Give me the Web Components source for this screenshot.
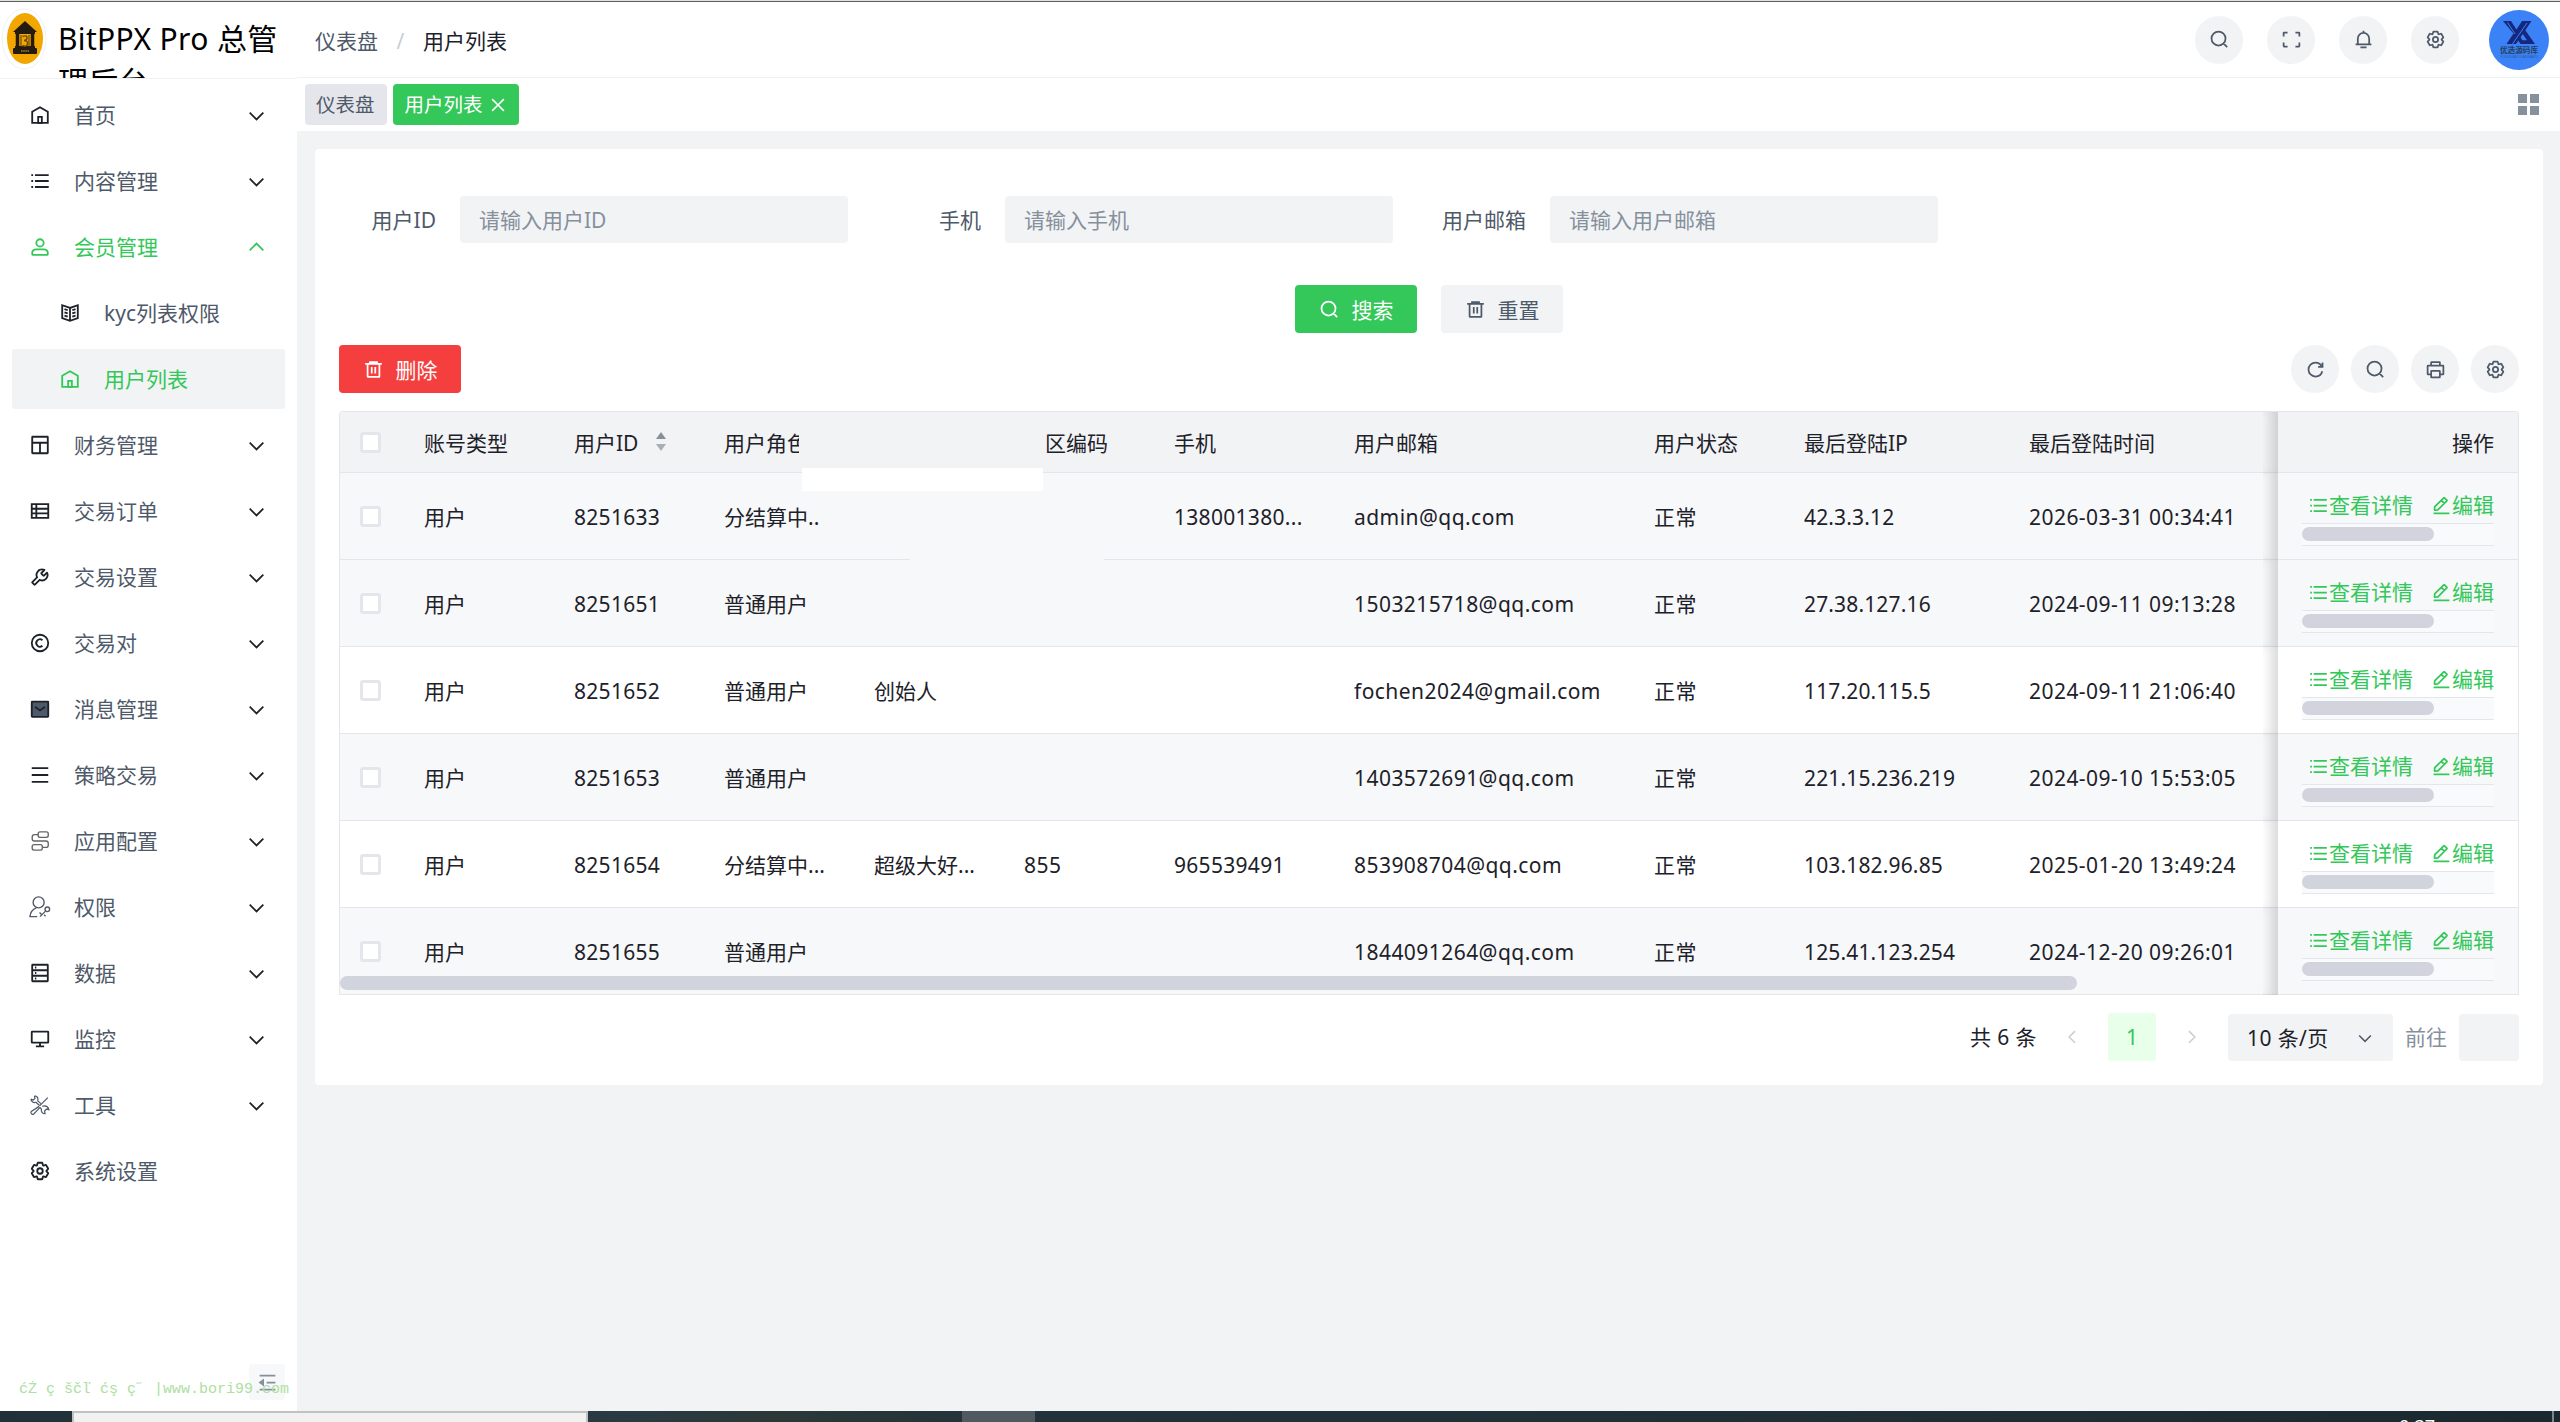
<!DOCTYPE html>
<html lang="zh-CN">
<head>
<meta charset="utf-8">
<title>BitPPX Pro 总管理后台</title>
<style>
  html, body {
    margin: 0;
    height: 100%;
    overflow: hidden;
  }

  body {
    font-family: "Noto Sans", "Noto Sans CJK SC", sans-serif;
    font-size: 21px;
    line-height: 30px;
    color: #1d2129;
    background: #f2f3f5;
    --green: #34c759;
    --text-2: #4e5969;
    --text-3: #86909c;
    --fill: #f2f3f5;
    --line: #e5e6eb;
  }
</style>
</head>
<body>
<admin-app></admin-app>

<script>
const ICONS = {
  home: '<path d="M7 17 24 7l17 10v24H7V17Z"/><path d="M20 28h8v13h-8V28Z"/>',
  list: '<path d="M13 24h30M5 11h4m4 26h30M13 11h30M5 24h4M5 37h4"/>',
  user: '<path d="M7 37c0-4.97 4.03-8 9-8h16c4.97 0 9 3.03 9 8v3a1 1 0 0 1-1 1H8a1 1 0 0 1-1-1v-3Z"/><circle cx="24" cy="15" r="8"/>',
  book: '<path d="M24 13 7 7v28l17 6 17-6V7l-17 6Zm0 0v27.5M29 18l7-2.5M29 25l7-2.5M29 32l7-2.5M19 18l-7-2.5m7 9.5-7-2.5m7 9.5-7-2.5"/>',
  layout: '<rect x="7" y="6" width="34" height="36" rx="1"/><path d="M7 19h34M24 19v23"/>',
  nav: '<path d="M6 19h10m0 0h26m-26 0V9m0 10v10m0 0v10m0-10H6m10 0h26M6 9h36v30H6V9Z"/>',
  tool: '<path d="M19.994 11.035c3.66-3.659 9.094-4.46 13.531-2.405a.1.1 0 0 1 .028.16l-6.488 6.488a1 1 0 0 0 0 1.414l4.243 4.243a1 1 0 0 0 1.414 0l6.488-6.488a.1.1 0 0 1 .16.028c2.056 4.437 1.254 9.872-2.405 13.53-3.695 3.696-9.2 4.477-13.66 2.347L12.923 40.733a1 1 0 0 1-1.414 0L7.266 36.49a1 1 0 0 1 0-1.414l10.382-10.382c-2.13-4.46-1.349-9.965 2.346-13.66Z"/>',
  copyright: '<path d="M29.292 18a8 8 0 1 0 0 12"/><circle cx="24" cy="24" r="18"/>',
  email: '<rect x="6" y="8" width="36" height="33" rx="1" fill="#4e5969"/><path d="m13 19 11 8 11-8"/>',
  menu: '<path d="M42 9H6m36 15H6m36 15H6"/>',
  flow: '<g stroke="#666" stroke-width="3"><rect x="20" y="4" width="22" height="12" rx="4"/><rect x="7" y="32" width="22" height="12" rx="4"/><path d="M20 10h-8a5 5 0 0 0-5 5v4a5 5 0 0 0 5 5h25a5 5 0 0 1 5 5v4a5 5 0 0 1-5 5h-8"/></g>',
  role: '<g stroke="#4e5969" stroke-width="3"><circle cx="21" cy="14" r="12"/><path d="M16 26C8 29 3 36 2 45h16"/><circle cx="40" cy="29" r="5"/><path d="m36 33-12 12M28 41l-5-5M33 41l3 3"/></g>',
  storage: '<path d="M7 18h34v12H7V18ZM40 6H8a1 1 0 0 0-1 1v11h34V7a1 1 0 0 0-1-1ZM7 30h34v11a1 1 0 0 1-1 1H8a1 1 0 0 1-1-1V30Z"/><path d="M13 12h3M13 24h3M13 36h3"/>',
  desktop: '<path d="M24 32v8m0 0h-9m9 0h9M7 32h34a1 1 0 0 0 1-1V9a1 1 0 0 0-1-1H7a1 1 0 0 0-1 1v22a1 1 0 0 0 1 1Z"/>',
  wrench: '<g stroke="#4e5969" stroke-width="2.6"><path d="M41 8 23 26M22 27 5 38a4 4 0 0 0 5 6l14-15"/><path d="M4 11c1 6 6 9 11 7l8 7M12 4c6 0 9 5 7 11l7 6M4 11l5 2 4-3-1-6M29 27c6-2 12 0 14 6l-5 0-4 4 1 6c-6 0-9-5-8-10l-3-4M38 33l7 2"/></g>',
  setting: '<path d="M18.797 6.732A1 1 0 0 1 19.76 6h8.48a1 1 0 0 1 .964.732l1.285 4.628a1 1 0 0 0 1.213.7l4.651-1.2a1 1 0 0 1 1.116.468l4.24 7.344a1 1 0 0 1-.153 1.2L38.193 23.3a1 1 0 0 0 0 1.402l3.364 3.427a1 1 0 0 1 .153 1.2l-4.24 7.344a1 1 0 0 1-1.116.468l-4.65-1.2a1 1 0 0 0-1.214.7l-1.285 4.628a1 1 0 0 1-.964.732h-8.48a1 1 0 0 1-.963-.732L17.51 36.64a1 1 0 0 0-1.213-.7l-4.65 1.2a1 1 0 0 1-1.116-.468l-4.24-7.344a1 1 0 0 1 .153-1.2L9.809 24.7a1 1 0 0 0 0-1.402l-3.364-3.427a1 1 0 0 1-.153-1.2l4.24-7.344a1 1 0 0 1 1.116-.468l4.65 1.2a1 1 0 0 0 1.213-.7l1.286-4.628Z"/><circle cx="24" cy="24" r="6"/>',
  search: '<path d="M33.072 33.071c6.248-6.248 6.248-16.379 0-22.627-6.249-6.249-16.38-6.249-22.628 0-6.248 6.248-6.248 16.379 0 22.627 6.248 6.248 16.38 6.248 22.628 0Zm0 0 8.485 8.485"/>',
  fullscreen: '<path d="M42 17V9a1 1 0 0 0-1-1h-8M6 17V9a1 1 0 0 1 1-1h8m27 23v8a1 1 0 0 1-1 1h-8M6 31v8a1 1 0 0 0 1 1h8"/>',
  bell: '<path d="M24 9c7.18 0 13 5.82 13 13v13H11V22c0-7.18 5.82-13 13-13Zm0 0V4M6 35h36m-25 7h14"/>',
  trash: '<path d="M5 11h5.5m0 0v29a1 1 0 0 0 1 1h25a1 1 0 0 0 1-1V11m-27 0H16m21.5 0H43m-5.5 0H32m-16 0V7h16v4m-16 0h16M20 18v15m8-15v15"/>',
  refresh: '<path d="M38.837 18C36.463 12.136 30.715 8 24 8 15.163 8 8 15.163 8 24s7.163 16 16 16c7.455 0 13.72-5.1 15.496-12M40 8v10H30"/>',
  printer: '<path d="M14 15V8a1 1 0 0 1 1-1h18a1 1 0 0 1 1 1v7M14 35H7a1 1 0 0 1-1-1V16a1 1 0 0 1 1-1h34a1 1 0 0 1 1 1v18a1 1 0 0 1-1 1h-7"/><rect x="14" y="27" width="20" height="15" rx="1"/>',
  edit: '<path d="m30.48 19.038 5.733-5.734a1 1 0 0 0 0-1.414l-5.586-5.586a1 1 0 0 0-1.414 0l-5.734 5.734m7 7L15.763 33.754a1 1 0 0 1-.59.286l-6.048.708a1 1 0 0 1-1.113-1.069l.477-6.31a1 1 0 0 1 .29-.631l14.7-14.7m7 7-7-7M6 42h36"/>',
  fold: '<path d="M42 8H6m36 16H22m20 16H6"/><path d="m14 29-7-5 7-5v10Z" fill="currentColor"/>',
  close: '<path d="M9.857 9.858 24 24m0 0 14.142 14.142M24 24 38.142 9.858M24 24 9.857 38.142"/>',
  down: '<path d="M39.6 17.443 24.043 33 8.487 17.443"/>',
  up: '<path d="M39.6 30.557 24.043 15 8.487 30.557"/>',
  left: '<path d="M32 8.4 16.444 23.956 32 39.513"/>',
  right: '<path d="m16 39.513 15.556-15.557L16 8.4"/>',
};

class UiIcon extends HTMLElement {
  constructor() {
    super();
    this.attachShadow({ mode: "open" });
  }

  connectedCallback() {
    this.shadowRoot.innerHTML = `
      <style>
        :host { display: inline-flex; flex: none; width: 22px; height: 22px; }
        svg { width: 100%; height: 100%; }
      </style>
      <svg viewBox="0 0 48 48" fill="none" stroke="currentColor" stroke-width="4">${ICONS[this.getAttribute("name")]}</svg>
    `;
  }
}

class MenuItem extends HTMLElement {
  constructor() {
    super();
    this.attachShadow({ mode: "open" });
  }

  static get styles() {
    return `
      :host {
        display: flex;
        align-items: center;
        box-sizing: border-box;
        height: 60px;
        padding: 0 18px 0 17px;
        border-radius: 3px;
        color: var(--text-2);
      }
      :host([sub]) { padding-left: 47px; }
      :host([active]) { color: var(--green); }
      :host([selected]) { background: var(--fill); color: var(--green); }
      ui-icon { color: #1d2129; }
      :host([active]) ui-icon, :host([selected]) ui-icon { color: inherit; }
      span { flex: 1; margin-left: 23px; }
      .arrow { width: 21px; height: 21px; }
    `;
  }

  connectedCallback() {
    const arrow = this.getAttribute("arrow");
    this.shadowRoot.innerHTML = `
      <style>${MenuItem.styles}</style>
      <ui-icon name="${this.getAttribute("icon")}"></ui-icon>
      <span><slot></slot></span>
      ${arrow ? `<ui-icon class="arrow" name="${arrow}"></ui-icon>` : ""}
    `;
  }
}

class SideBar extends HTMLElement {
  constructor() {
    super();
    this.attachShadow({ mode: "open" });
  }

  static get styles() {
    return `
      :host {
        display: flex;
        flex-direction: column;
        width: 297px;
        background: #fff;
        position: relative;
      }
      .logo {
        display: flex;
        box-sizing: border-box;
        height: 77px;
        padding: 6px 12px 0 1px;
        border-bottom: 1px solid #f0f1f3;
        overflow: hidden;
      }
      .logo svg { flex: none; width: 46px; height: 62px; }
      .logo h1 {
        margin: 9px 0 0 11px;
        font-size: 30px;
        line-height: 43px;
        font-weight: 400;
        letter-spacing: .35px;
        color: #000;
      }
      nav {
        display: flex;
        flex-direction: column;
        gap: 6px;
        padding: 6px 12px;
      }
      .fold {
        display: flex;
        align-items: center;
        justify-content: center;
        width: 36px;
        height: 36px;
        margin: auto 12px 11px auto;
        border-radius: 3px;
        background: #f7f8fa;
        color: var(--text-3);
      }
      .fold ui-icon { width: 21px; height: 21px; }
      /* site stamp lies over the fold button */
      .stamp {
        position: absolute;
        left: 19px;
        bottom: 11px;
        font: 15px/20px "Liberation Mono", monospace;
        color: #aee0a2;
        white-space: pre;
      }
    `;
  }

  connectedCallback() {
    this.shadowRoot.innerHTML = `
      <style>${SideBar.styles}</style>
      <div class="logo">
        <svg viewBox="0 0 46 62">
          <ellipse cx="23" cy="31" rx="22" ry="30" fill="#fff" stroke="#f1f1f1"/>
          <ellipse cx="24" cy="30.500" rx="18" ry="25.500" fill="#f2a600"/>
          <path d="M12 24 24 13l12 11Z" fill="#231a12"/>
          <path d="M14 25h20M14 39h20" stroke="#231a12" stroke-width="2"/>
          <path d="M16.500 25v15M31.500 25v15" stroke="#231a12" stroke-width="3.500"/>
          <path d="M20 27v12M28 27v12" stroke="#5a3d08"/>
          <path d="M21.500 28.500q5-2 4.500 2-.5 2-3 2 4 0 3.500 3.500-1 3.500-5 1.500" fill="none" stroke="#6b4808" stroke-width="1.400"/>
          <rect x="12" y="40" width="24" height="6" rx="1" fill="#231a12"/>
          <path d="M20 43h8" stroke="#8a6a20" stroke-width="2" stroke-dasharray="1.500 .7"/>
        </svg>
        <h1>BitPPX Pro 总管理后台</h1>
      </div>
      <nav>
        <menu-item icon="home" arrow="down">首页</menu-item>
        <menu-item icon="list" arrow="down">内容管理</menu-item>
        <menu-item icon="user" arrow="up" active>会员管理</menu-item>
        <menu-item icon="book" sub>kyc列表权限</menu-item>
        <menu-item icon="home" sub selected>用户列表</menu-item>
        <menu-item icon="layout" arrow="down">财务管理</menu-item>
        <menu-item icon="nav" arrow="down">交易订单</menu-item>
        <menu-item icon="tool" arrow="down">交易设置</menu-item>
        <menu-item icon="copyright" arrow="down">交易对</menu-item>
        <menu-item icon="email" arrow="down">消息管理</menu-item>
        <menu-item icon="menu" arrow="down">策略交易</menu-item>
        <menu-item icon="flow" arrow="down">应用配置</menu-item>
        <menu-item icon="role" arrow="down">权限</menu-item>
        <menu-item icon="storage" arrow="down">数据</menu-item>
        <menu-item icon="desktop" arrow="down">监控</menu-item>
        <menu-item icon="wrench" arrow="down">工具</menu-item>
        <menu-item icon="setting">系统设置</menu-item>
      </nav>
      <div class="fold"><ui-icon name="fold"></ui-icon></div>
      <div class="stamp">ćŻ ç ščľ ćş ç˝ |www.bori99.com</div>
    `;
  }
}

class RoundButton extends HTMLElement {
  constructor() {
    super();
    this.attachShadow({ mode: "open" });
  }

  connectedCallback() {
    this.shadowRoot.innerHTML = `
      <style>
        :host {
          display: flex;
          align-items: center;
          justify-content: center;
          width: 48px;
          height: 48px;
          border-radius: 50%;
          background: var(--fill);
          color: var(--text-2);
        }
        ui-icon { width: 21px; height: 21px; }
      </style>
      <ui-icon name="${this.getAttribute("icon")}"></ui-icon>
    `;
  }
}

class UiButton extends HTMLElement {
  constructor() {
    super();
    this.attachShadow({ mode: "open" });
  }

  connectedCallback() {
    this.shadowRoot.innerHTML = `
      <style>
        :host {
          display: inline-flex;
          align-items: center;
          justify-content: center;
          gap: 12px;
          width: 122px;
          height: 48px;
          border-radius: 4px;
          background: var(--fill);
          color: var(--text-2);
        }
        :host([type=primary]) { background: var(--green); color: #fff; }
        :host([type=danger]) { background: #f53f3f; color: #fff; }
        ui-icon { width: 21px; height: 21px; }
        span { padding-top: 1px; }
      </style>
      <ui-icon name="${this.getAttribute("icon")}"></ui-icon><span><slot></slot></span>
    `;
  }
}

class TopBar extends HTMLElement {
  constructor() {
    super();
    this.attachShadow({ mode: "open" });
  }

  static get styles() {
    return `
      :host { display: block; background: #fff; }
      header {
        display: flex;
        align-items: center;
        box-sizing: border-box;
        height: 76px;
        padding: 0 11px 0 18px;
        border-bottom: 1px solid #f0f1f3;
      }
      .crumb { display: flex; color: var(--text-2); padding-top: 3px; }
      .crumb i { width: 45px; text-align: center; color: #c9cdd4; font-style: normal; }
      .crumb b { font-weight: 400; color: #1d2129; }
      .actions { display: flex; align-items: center; gap: 24px; margin-left: auto; }
      .avatar { width: 60px; height: 60px; margin-left: 6px; }
      .tabs { display: flex; align-items: center; height: 53px; padding: 0 21px 0 8px; }
      .tab {
        display: flex;
        align-items: center;
        height: 41px;
        padding: 0 12px 0 11px;
        margin-right: 6px;
        border-radius: 4px;
        font-size: 19.5px;
        background: #e5e6eb;
        color: var(--text-2);
      }
      .tab.on { background: var(--green); color: #fff; padding: 0 11px 0 12px; }
      .tab ui-icon { width: 20px; height: 20px; margin-left: 5px; }
      .grid { display: grid; grid-template-columns: 9px 9px; grid-auto-rows: 9px; gap: 3px; margin-left: auto; }
      .grid i { background: #87909d; }
    `;
  }

  connectedCallback() {
    this.shadowRoot.innerHTML = `
      <style>${TopBar.styles}</style>
      <header>
        <div class="crumb">仪表盘<i>/</i><b>用户列表</b></div>
        <div class="actions">
          <round-button icon="search"></round-button>
          <round-button icon="fullscreen"></round-button>
          <round-button icon="bell"></round-button>
          <round-button icon="setting"></round-button>
          <svg class="avatar" viewBox="0 0 60 60">
            <circle cx="30" cy="30" r="30" fill="#3b82f6"/>
            <path d="M14 11h8l5.500 8.500L33 11h9.500L27 34h-9.500l7-10.500Z" fill="#15277f"/>
            <path d="M34 17 46 34H31.500l-3.500-5.500 2.200-3.300 3.200 5h4.600l-6.500-9.700Z" fill="#15277f"/>
            <path d="M18.500 12.500 26 24M38 13 23.500 34" stroke="#3b82f6" stroke-width="1" fill="none"/>
            <text x="30" y="43" text-anchor="middle" font-family="Noto Sans CJK SC" font-weight="700" font-size="7.600" fill="#23405f">优选源码库</text>
            <text x="30" y="48" text-anchor="middle" font-family="Liberation Sans" font-size="3.600" fill="#2b5e9e">YOUXUANYUANMAKU</text>
          </svg>
        </div>
      </header>
      <div class="tabs">
        <div class="tab">仪表盘</div>
        <div class="tab on">用户列表<ui-icon name="close"></ui-icon></div>
        <div class="grid"><i></i><i></i><i></i><i></i></div>
      </div>
    `;
  }
}

class FormField extends HTMLElement {
  constructor() {
    super();
    this.attachShadow({ mode: "open" });
  }

  connectedCallback() {
    this.shadowRoot.innerHTML = `
      <style>
        :host { display: flex; align-items: center; width: 509px; margin-right: 36px; }
        label { width: 97px; margin-right: 24px; text-align: right; white-space: nowrap; color: var(--text-2); }
        div {
          box-sizing: border-box;
          width: 388px;
          height: 47px;
          padding: 9px 19px;
          border-radius: 4px;
          background: var(--fill);
          color: var(--text-3);
        }
      </style>
      <label>${this.getAttribute("label")}</label>
      <div>请输入${this.getAttribute("label")}</div>
    `;
  }
}

const USERS = [
  ["用户", "8251633", "分结算中..", "", "", "138001380...", "admin@qq.com", "正常", "42.3.3.12", "2026-03-31 00:34:41"],
  ["用户", "8251651", "普通用户", "", "", "", "1503215718@qq.com", "正常", "27.38.127.16", "2024-09-11 09:13:28"],
  ["用户", "8251652", "普通用户", "创始人", "", "", "fochen2024@gmail.com", "正常", "117.20.115.5", "2024-09-11 21:06:40"],
  ["用户", "8251653", "普通用户", "", "", "", "1403572691@qq.com", "正常", "221.15.236.219", "2024-09-10 15:53:05"],
  ["用户", "8251654", "分结算中...", "超级大好...", "855", "965539491", "853908704@qq.com", "正常", "103.182.96.85", "2025-01-20 13:49:24"],
  ["用户", "8251655", "普通用户", "", "", "", "1844091264@qq.com", "正常", "125.41.123.254", "2024-12-20 09:26:01"],
];

class UserTable extends HTMLElement {
  constructor() {
    super();
    this.attachShadow({ mode: "open" });
  }

  static get styles() {
    return `
      :host {
        display: block;
        position: relative;
        border: 1px solid var(--line);
        border-bottom: 0;
        border-radius: 4px 4px 0 0;
        overflow: hidden;
      }
      .row {
        display: grid;
        grid-template-columns: 60px 150px 150px 150px 150px 150px 180px 300px 150px 225px 273px 240px;
        height: 86px;
        border-bottom: 1px solid var(--line);
      }
      .row.head { height: 60px; background: var(--fill); }
      .row.tint { background: #f7f8fa; }
      .cell {
        display: flex;
        align-items: center;
        padding: 0 24px;
        white-space: nowrap;
      }
      .row:not(.head) .cell { padding-top: 2px; letter-spacing: .45px; }
      .row:not(.head) .cell:nth-child(2), .row:not(.head) .cell:nth-child(4), .row:not(.head) .cell:nth-child(5) { letter-spacing: 0; }
      .row:not(.head) .cell:nth-child(3), .row:not(.head) .cell:nth-child(7) { letter-spacing: .3px; }
      .row:not(.head) .cell:nth-child(10) { letter-spacing: .15px; }
      .head .cell { padding-top: 1px; }
      .row .cell.check { padding: 0 0 0 20px; }
      .check i {
        box-sizing: border-box;
        width: 21px;
        height: 21px;
        border: 3px solid var(--line);
        border-radius: 3px;
        background: #fff;
      }
      .cut span { width: 75px; overflow: hidden; }
      .row .cell.area { padding-left: 45px; }
      .sort { display: grid; gap: 5px; margin: -3px 0 0 18px; }
      .sort i { border: 5.5px solid transparent; border-top: 0; border-bottom: 7px solid #86909c; }
      .sort i + i { border-bottom: 0; border-top: 7px solid #a9aeb8; }
      .fixed { position: relative; display: flex; flex-direction: column; align-items: flex-end; }
      .fixed::before {
        content: "";
        position: absolute;
        top: 0;
        bottom: -1px;
        left: -15px;
        width: 15px;
        box-shadow: inset -12px 0 12px -5px rgba(0, 0, 0, .15);
      }
      .head .fixed { padding: 16px 24px 0 0; height: 44px; }
      .links { display: flex; align-items: center; height: 30px; margin: 17px 24px 0 0; color: var(--green); }
      .links ui-icon { width: 21px; height: 21px; }
      .links span { margin-right: 18px; }
      .links span:last-child { margin-right: 0; }
      .track {
        box-sizing: border-box;
        width: 192px;
        height: 23px;
        margin: 3px 24px 0 0;
        padding-top: 3px;
        border: solid var(--line);
        border-width: 1px 0;
        background: #f9fafb;
      }
      .track i, .bar { display: block; width: 132px; height: 14px; border-radius: 7px; background: #d1d4dd; }
      /* horizontal scrollbar and blanked areas lie over the rows */
      .bar { position: absolute; left: 0; bottom: 5px; width: 1737px; }
      .blank { position: absolute; left: 462px; top: 56px; width: 241px; height: 23px; background: #fff; }
      .blank.two { left: 570px; top: 140px; width: 194px; height: 12px; background: #f7f8fa; }
    `;
  }

  renderRow(user, index) {
    return `
      <div class="row ${index === 0 || index % 2 ? "tint" : ""}">
        <div class="cell check"><i></i></div>
        ${user.map((text) => `<div class="cell">${text}</div>`).join("")}
        <div class="fixed">
          <div class="links">
            <ui-icon name="list"></ui-icon><span>查看详情</span>
            <ui-icon name="edit"></ui-icon><span>编辑</span>
          </div>
          <div class="track"><i></i></div>
        </div>
      </div>
    `;
  }

  connectedCallback() {
    this.shadowRoot.innerHTML = `
      <style>${UserTable.styles}</style>
      <div class="row head">
        <div class="cell check"><i></i></div>
        <div class="cell">账号类型</div>
        <div class="cell">用户ID<span class="sort"><i></i><i></i></span></div>
        <div class="cell cut"><span>用户角色</span></div>
        <div class="cell"></div>
        <div class="cell area">区编码</div>
        <div class="cell">手机</div>
        <div class="cell">用户邮箱</div>
        <div class="cell">用户状态</div>
        <div class="cell">最后登陆IP</div>
        <div class="cell">最后登陆时间</div>
        <div class="fixed">操作</div>
      </div>
      ${USERS.map((user, index) => this.renderRow(user, index)).join("")}
      <div class="blank"></div>
      <div class="blank two"></div>
      <div class="bar"></div>
    `;
  }
}

class PageNav extends HTMLElement {
  constructor() {
    super();
    this.attachShadow({ mode: "open" });
  }

  connectedCallback() {
    this.shadowRoot.innerHTML = `
      <style>
        :host { display: flex; align-items: center; justify-content: flex-end; height: 48px; margin-top: 18px; }
        .step { width: 18px; height: 18px; margin: 0 27px; color: #c9cdd4; }
        .total { letter-spacing: .4px; margin-right: -1px; }
        .page {
          width: 48px;
          line-height: 48px;
          text-align: center;
          border-radius: 3px;
          background: #e8ffea;
          color: var(--green);
        }
        .size {
          display: flex;
          align-items: center;
          justify-content: space-between;
          box-sizing: border-box;
          width: 165px;
          height: 47px;
          padding: 1px 19px 0 19px;
          border-radius: 4px;
          background: var(--fill);
          letter-spacing: .4px;
        }
        .size ui-icon { width: 18px; height: 18px; color: var(--text-2); }
        .goto { margin: 0 12px; color: var(--text-3); }
        .jump { width: 60px; height: 47px; border-radius: 4px; background: var(--fill); }
      </style>
      <span class="total">共 6 条</span>
      <ui-icon class="step" name="left"></ui-icon>
      <span class="page">1</span>
      <ui-icon class="step" name="right"></ui-icon>
      <div class="size">10 条/页<ui-icon name="down"></ui-icon></div>
      <span class="goto">前往</span>
      <div class="jump"></div>
    `;
  }
}

class UserPanel extends HTMLElement {
  constructor() {
    super();
    this.attachShadow({ mode: "open" });
  }

  connectedCallback() {
    this.shadowRoot.innerHTML = `
      <style>
        :host {
          display: block;
          box-sizing: border-box;
          width: 2228px;
          height: 936px;
          margin: 18px 0 0 18px;
          padding: 47px 24px 0;
          border-radius: 4px;
          background: #fff;
        }
        .fields, .submit, .tools { display: flex; }
        .submit { justify-content: center; gap: 24px; margin-top: 42px; }
        .tools { gap: 12px; margin: 12px 0 18px; }
        .tools ui-button { margin-right: auto; }
      </style>
      <div class="fields">
        <form-field label="用户ID"></form-field>
        <form-field label="手机"></form-field>
        <form-field label="用户邮箱"></form-field>
      </div>
      <div class="submit">
        <ui-button type="primary" icon="search">搜索</ui-button>
        <ui-button icon="trash">重置</ui-button>
      </div>
      <div class="tools">
        <ui-button type="danger" icon="trash">删除</ui-button>
        <round-button icon="refresh"></round-button>
        <round-button icon="search"></round-button>
        <round-button icon="printer"></round-button>
        <round-button icon="setting"></round-button>
      </div>
      <user-table></user-table>
      <page-nav></page-nav>
    `;
  }
}

class TaskBar extends HTMLElement {
  constructor() {
    super();
    this.attachShadow({ mode: "open" });
  }

  connectedCallback() {
    this.shadowRoot.innerHTML = `
      <style>
        :host {
          display: flex;
          height: 11px;
          overflow: hidden;
          background: linear-gradient(90deg, #20313a, #2a3a42 25%, #2c3838 30%, #22323a 40%, #1f2e35 80%, #1a2830);
        }
        .find { box-sizing: border-box; width: 516px; margin-left: 72px; border: 2px solid #c0c1c1; border-bottom: 0; background: #f1f1f1; }
        .app { width: 73px; margin-left: 374px; background: #50595f; }
        time { margin: 5px 0 0 auto; padding-right: 117px; font-size: 18px; line-height: 20px; color: #fff; }
        .edge { width: 2px; margin-right: 6px; background: #7d868a; }
      </style>
      <div class="find"></div>
      <div class="app"></div>
      <time>9:37</time>
      <div class="edge"></div>
    `;
  }
}

class AdminApp extends HTMLElement {
  constructor() {
    super();
    this.attachShadow({ mode: "open" });
  }

  connectedCallback() {
    this.shadowRoot.innerHTML = `
      <style>
        :host { display: flex; flex-direction: column; height: 100vh; }
        .frame { flex: none; height: 1px; border-bottom: 1px solid #5a5f5c; background: #dfe3df; }
        .body { flex: 1; display: flex; min-height: 0; }
        main { flex: 1; }
      </style>
      <div class="frame"></div>
      <div class="body">
        <side-bar></side-bar>
        <main>
          <top-bar></top-bar>
          <user-panel></user-panel>
        </main>
      </div>
      <task-bar></task-bar>
    `;
  }
}

customElements.define("ui-icon", UiIcon);
customElements.define("menu-item", MenuItem);
customElements.define("round-button", RoundButton);
customElements.define("ui-button", UiButton);
customElements.define("form-field", FormField);
customElements.define("side-bar", SideBar);
customElements.define("top-bar", TopBar);
customElements.define("user-table", UserTable);
customElements.define("page-nav", PageNav);
customElements.define("user-panel", UserPanel);
customElements.define("task-bar", TaskBar);
customElements.define("admin-app", AdminApp);
</script>
</body>
</html>
